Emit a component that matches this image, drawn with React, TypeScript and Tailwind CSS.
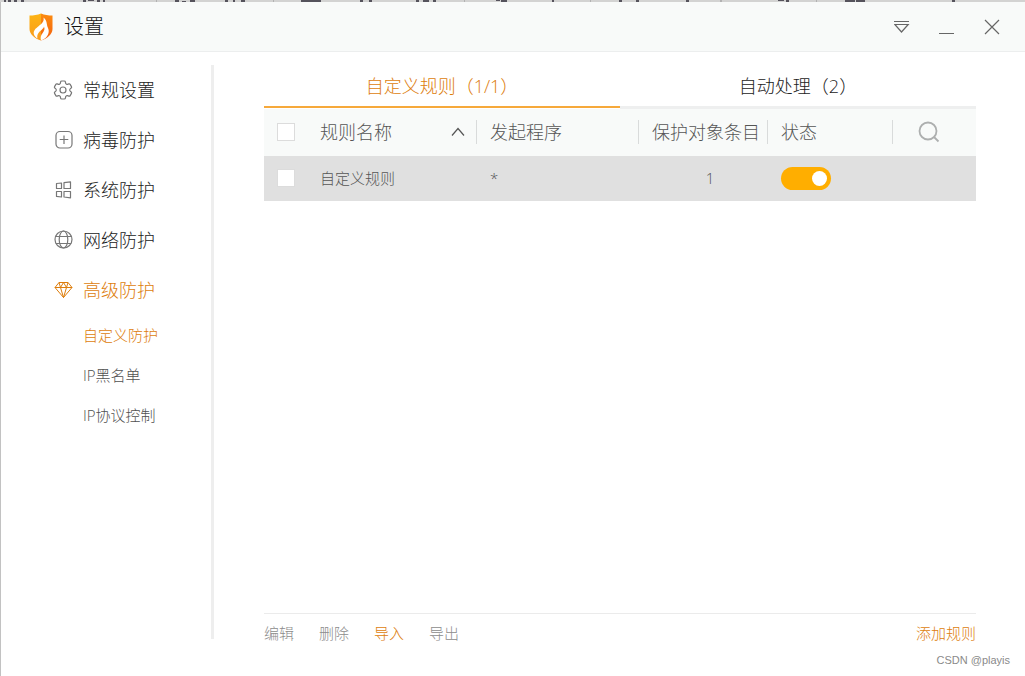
import { useState } from "react";
import type { ReactNode } from "react";
import { HiOutlineCog6Tooth } from "react-icons/hi2";

type NavItem = { label: string; icon: ReactNode; active?: boolean };

function LineIcon({ children }: { children: ReactNode }) {
  return (
    <svg
      className="size-6 shrink-0"
      viewBox="0 0 24 24"
      fill="none"
      stroke="currentColor"
      strokeWidth="1.2"
      strokeLinejoin="round"
      aria-hidden="true"
    >
      {children}
    </svg>
  );
}

const navItems: NavItem[] = [
  { label: "常规设置", icon: <HiOutlineCog6Tooth className="size-6 shrink-0" strokeWidth={1.2} /> },
  {
    label: "病毒防护",
    icon: (
      <LineIcon>
        <rect x="5" y="3.5" width="16" height="16.5" rx="4" />
        <path d="M13 7.5v8.500M8.700 11.500h8.600" />
      </LineIcon>
    ),
  },
  {
    label: "系统防护",
    icon: (
      <LineIcon>
        <path d="M5.500 5.500l5-.5v5.500h-5zM13 4.700l6.500-.9v6.700H13zM5.500 13.500h5V19l-5-.6zM13 13.500h6.500v6.300L13 19z" />
      </LineIcon>
    ),
  },
  {
    label: "网络防护",
    icon: (
      <LineIcon>
        <circle cx="12.500" cy="11.500" r="8.500" />
        <ellipse cx="12.500" cy="11.500" rx="4.300" ry="8.500" />
        <path d="M4.800 8.500h15.400M4.800 15.500h15.400" />
      </LineIcon>
    ),
  },
  {
    label: "高级防护",
    active: true,
    icon: (
      <LineIcon>
        <path
          d="M8 4.500h9L21 9.500 12.500 19.500 4 9.500zM4 9.500h17M8 4.500l1.500 5 3-5 3 5 1.500-5M9.500 9.500l3 10 3-10"
          strokeWidth="1"
        />
      </LineIcon>
    ),
  },
];

const subItems = ["自定义防护", "IP黑名单", "IP协议控制"];

function Logo() {
  return (
    <svg className="h-7 w-6" viewBox="0 0 24 28" aria-hidden="true">
      <defs>
        <linearGradient id="shieldLeft" x1="0" y1="0" x2="0" y2="1">
          <stop offset="0" stopColor="#fdb515" />
          <stop offset="1" stopColor="#f99a1c" />
        </linearGradient>
        <linearGradient id="shieldRight" x1="0" y1="0" x2="0" y2="1">
          <stop offset="0" stopColor="#fb8c10" />
          <stop offset="1" stopColor="#f4600f" />
        </linearGradient>
      </defs>
      <path d="M12 .5C8.500 2 4.500 2.500.5 2.500V16c0 5.500 5.500 9.500 11.500 11.500z" fill="url(#shieldLeft)" />
      <path d="M12 .5c3.500 1.500 7.500 2 11.500 2V16c0 5.500-5.500 9.500-11.500 11.500z" fill="url(#shieldRight)" />
      <path
        d="M14.500 4.500c.8 4-1.500 6-4.700 8.500C6.500 15.500 3.800 18 5 21.500c.6 1.800 1.900 3 3.500 4-1-4.500 1.500-6.500 4-8.600 1.300-1.100 2.300-2 2.500-3.400 1 2.400.4 4.300-1.300 6.400-1.600 2-2.700 4-1.700 7.600 3-.8 6.500-3.500 7.500-7.500.6-2.500 0-4-.7-5.500-1.500-3.200-.3-6.500-4.300-10z"
        fill="#fff"
      />
    </svg>
  );
}

// Sliver of the window behind, seen above the title bar
function BackdropEdge() {
  return (
    <svg className="block h-0.5 w-full" preserveAspectRatio="none" viewBox="0 0 1025 2" aria-hidden="true">
      <rect width="1025" height="2" fill="#d3d3d2" />
      <path
        d="M4 0h2v2h-2zM8 0h3v2h-3zM14 0h3v2h-3zM21 0h3v2h-3zM83 0h3v2h-3zM88 0h6v1h-6zM97 0h3v2h-3zM103 0h2v2h-2zM175 0h4v2h-4zM182 1h4v1h-4zM190 0h5v2h-5zM225 0h3v2h-3zM233 0h2v2h-2zM241 0h4v2h-4zM301 0h20v2h-20zM360 0h3v2h-3zM369 0h3v2h-3zM416 0h3v2h-3zM423 0h6v2h-6zM433 0h3v2h-3zM496 0h4v1h-4zM501 0h6v2h-6zM552 0h2v2h-2zM619 0h3v2h-3zM636 0h3v2h-3zM686 0h3v2h-3zM778 0h6v1h-6zM786 0h3v2h-3zM845 0h10v2h-10zM856 0h9v2h-9zM952 0h3v2h-3z"
        fill="#55535c"
      />
      <path d="M156 0h1v2h-1zM273 0h1v2h-1zM464 0h1v2h-1zM590 0h1v2h-1zM720 0h2v2h-2zM816 0h1v2h-1z" fill="#b2b2b2" />
    </svg>
  );
}

function TitleBar() {
  const button = "flex h-10 w-[45px] items-center justify-center text-[#666] hover:bg-black/5";
  return (
    <header className="flex h-[50px] items-center justify-between border-b border-[#eceeee] bg-[#f8faf9] pr-[11px] pl-7">
      <div className="flex items-center gap-[11px]">
        <Logo />
        <h1 className="text-xl text-[#111]">设置</h1>
      </div>
      <div className="flex">
        <button type="button" aria-label="菜单" className={button}>
          <svg className="size-4" viewBox="0 0 16 16" fill="none" stroke="currentColor" strokeWidth="1.2">
            <path d="M0 2.500h15M.8 5.500h13.400L7.500 13z" />
          </svg>
        </button>
        <button type="button" aria-label="最小化" className={button}>
          <svg className="size-4" viewBox="0 0 16 16" fill="none" stroke="currentColor">
            <path d="M0 14.500h15" />
          </svg>
        </button>
        <button type="button" aria-label="关闭" className={button}>
          <svg className="size-4" viewBox="0 0 16 16" fill="none" stroke="currentColor" strokeWidth="1.2">
            <path d="M1 1l14 14M15 1L1 15" />
          </svg>
        </button>
      </div>
    </header>
  );
}

function Sidebar() {
  return (
    <nav className="mt-[13px] mb-[37px] w-[213px] shrink-0 border-r-3 border-[#eeeeee] pl-[50px]">
      <ul>
        {navItems.map((item) => (
          <li key={item.label}>
            <a
              href="#"
              className={`flex h-[50px] items-center gap-2 text-lg ${item.active ? "text-[#dd7d0c]" : "text-[#777]"}`}
            >
              {item.icon}
              <span className={item.active ? "" : "text-[#222]"}>{item.label}</span>
            </a>
          </li>
        ))}
      </ul>
      <ul className="pl-8">
        {subItems.map((label, i) => (
          <li key={label}>
            <a
              href="#"
              className={`flex h-10 items-center text-[15px] ${i === 0 ? "text-[#dd7d0c]" : "text-[#505050]"}`}
            >
              {label}
            </a>
          </li>
        ))}
      </ul>
    </nav>
  );
}

function HeadCell({ children }: { children: ReactNode }) {
  return (
    <th className="p-0 pb-0.5 text-left font-light">
      <div className="flex h-6 items-center border-r border-[#d9dbdb] pl-[13px] whitespace-nowrap">{children}</div>
    </th>
  );
}

function RulesTable() {
  const [checked, setChecked] = useState(false);
  const [enabled, setEnabled] = useState(true);
  const box =
    "block size-[18px] appearance-none border border-[#dcdcdc] bg-white checked:border-[#ffae00] checked:bg-[#ffae00]";

  return (
    <table className="w-full table-fixed border-collapse">
      <colgroup>
        <col className="w-14" />
        <col className="w-[157px]" />
        <col />
        <col className="w-[129px]" />
        <col className="w-[125px]" />
        <col className="w-[83px]" />
      </colgroup>
      <thead>
        <tr className="h-[47px] bg-[#f8faf9] text-lg text-[#555]">
          <th className="p-0 pb-0.5 pl-[13px]">
            <input
              type="checkbox"
              aria-label="全选"
              className={box}
              checked={checked}
              onChange={(e) => setChecked(e.target.checked)}
            />
          </th>
          <th className="p-0 pb-0.5 text-left font-light">
            <div className="flex h-6 items-center justify-between border-r border-[#d9dbdb] pr-[11px]">
              规则名称
              <svg className="size-3.5" viewBox="0 0 14 14" fill="none" stroke="currentColor" strokeWidth="1.2">
                <path d="M1 10.500L7 3.500l6 7" />
              </svg>
            </div>
          </th>
          <HeadCell>发起程序</HeadCell>
          <HeadCell>保护对象条目</HeadCell>
          <HeadCell>状态</HeadCell>
          <th className="p-0 pb-0.5">
            <button type="button" aria-label="搜索" className="ml-[25px] block text-[#adafaf]">
              <svg className="size-[22px]" viewBox="0 0 22 22" fill="none" stroke="currentColor" strokeWidth="1.8">
                <circle cx="10" cy="10" r="8.500" />
                <path d="M16 16l4.500 4.500" />
              </svg>
            </button>
          </th>
        </tr>
      </thead>
      <tbody>
        <tr className="h-[45px] bg-[#e0e0e0] text-[15px] text-[#555]">
          <td className="p-0 pb-px pl-[13px]">
            <input
              type="checkbox"
              aria-label="自定义规则"
              className={box}
              checked={checked}
              onChange={(e) => setChecked(e.target.checked)}
            />
          </td>
          <td className="p-0">自定义规则</td>
          <td className="p-0 pl-[13px]">*</td>
          <td className="p-0 pl-[13px] text-center">1</td>
          <td className="p-0 pl-[13px]">
            <input
              type="checkbox"
              role="switch"
              aria-label="状态"
              checked={enabled}
              onChange={(e) => setEnabled(e.target.checked)}
              className="relative block h-[23px] w-[50px] appearance-none rounded-full bg-[#b5b5b5] before:absolute before:top-1 before:left-1 before:size-[15px] before:rounded-full before:bg-white checked:bg-[#ffae00] checked:before:left-[31px]"
            />
          </td>
          <td className="p-0" />
        </tr>
      </tbody>
    </table>
  );
}

export default function App() {
  const [tab, setTab] = useState(0);
  const tabs = ["自定义规则（1/1）", "自动处理（2）"];

  return (
    <div className="relative flex min-h-screen flex-col bg-white font-['Open_Sans','Noto_Sans_CJK_SC',sans-serif] font-light">
      <BackdropEdge />
      <div className="flex grow flex-col border-l border-[#c2c2c2]">
        <TitleBar />
        <div className="flex grow">
          <Sidebar />
          <main className="flex min-w-0 grow flex-col pt-[13px] pr-[49px] pb-[23px] pl-[50px]">
            <div className="flex h-11 items-start text-lg" role="tablist">
              {tabs.map((label, i) => (
                <button
                  key={label}
                  type="button"
                  role="tab"
                  aria-selected={tab === i}
                  onClick={() => setTab(i)}
                  className={`flex-1 ${
                    tab === i
                      ? "h-[43px] border-b-2 border-[#f6a93b] text-[#dd7d0c]"
                      : "h-11 border-b-3 border-[#eeefef] text-[#222]"
                  }`}
                >
                  {label}
                </button>
              ))}
            </div>
            <RulesTable />
            <div className="mt-auto flex h-10 items-center justify-between border-t border-[#ebebeb] text-[15px]">
              <div className="flex gap-[25px] text-[#8c8c8c]">
                <button type="button">编辑</button>
                <button type="button">删除</button>
                <button type="button" className="text-[#dd7d0c]">
                  导入
                </button>
                <button type="button">导出</button>
              </div>
              <button type="button" className="text-[#dd7d0c]">
                添加规则
              </button>
            </div>
          </main>
        </div>
      </div>
      <div className="absolute right-[15px] bottom-2 font-['Liberation_Sans',sans-serif] text-[11px] leading-4 text-[#8a8a8a]">
        CSDN @playis
      </div>
    </div>
  );
}
